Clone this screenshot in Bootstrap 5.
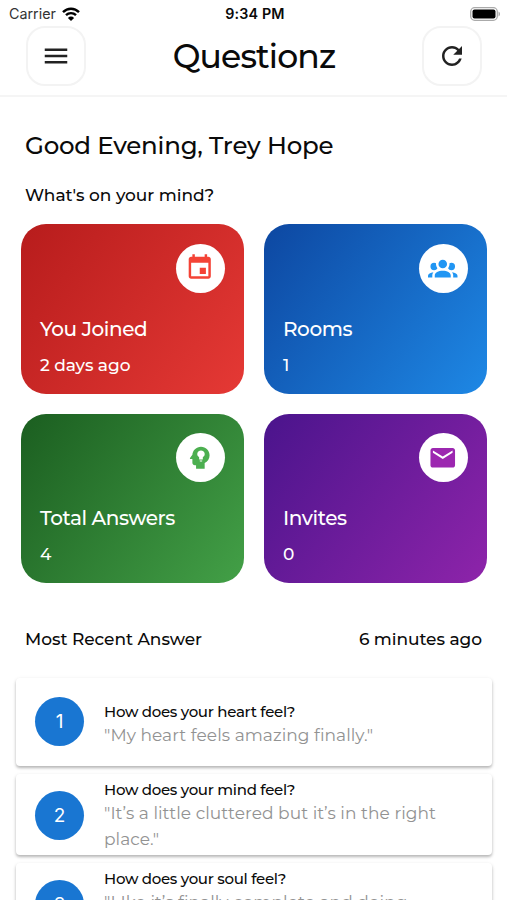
<!DOCTYPE html>
<html lang="en">
<head>
<meta charset="utf-8">
<meta name="viewport" content="width=device-width, initial-scale=1">
<title>Questionz</title>
<link href="https://cdn.jsdelivr.net/npm/bootstrap@5.3.0/dist/css/bootstrap.min.css" rel="stylesheet">
<style>
  body { font-family: Montserrat, Inter, sans-serif; color: #0a0a0a; background: #fff; }
  .screen { height: 900px; }
  .status-bar { height: 26px; font: 400 14.3px/26px Inter, sans-serif; padding: 1px 6px 0 9px; }
  .status-bar > * { flex: 1 1 0; }
  .carrier-group { gap: 6px; color: #333; }
  .clock { font-weight: 600; letter-spacing: .15px; }
  .app-header { height: 71px; padding: 0 25px 11px 26px; border-bottom: 2px solid #f5f5f5; }
  .tool-btn { width: 60px; height: 60px; border: 2px solid #f3f3f3; border-radius: 19px; color: #222; background: #fff; }
  .app-title { font-size: 33px; font-weight: 500; line-height: 60px; letter-spacing: -.85px; }
  .greeting { font-size: 24.5px; font-weight: 500; line-height: 32px; margin-top: 32px; padding-left: 25px; letter-spacing: -.22px; }
  .prompt { font-size: 17px; font-weight: 500; line-height: 24px; margin-top: 22px; padding-left: 25px; letter-spacing: -.04px; }
  .tiles { display: grid; grid-template-columns: 1fr 1fr; gap: 20px; padding: 0 20px 0 21px; margin-top: 17px; }
  .tile { height: 169.5px; border-radius: 25px; padding: 19.5px 19.5px 19.5px 19px; color: #fff; }
  .tile-red { background: linear-gradient(127.3deg, #b71c1c, #e53935); }
  .tile-blue { background: linear-gradient(127.3deg, #0d47a1, #1e88e5); }
  .tile-green { background: linear-gradient(127.3deg, #1b5e20, #43a047); }
  .tile-purple { background: linear-gradient(127.3deg, #4a148c, #8e24aa); }
  .tile-icon { width: 49px; height: 49px; }
  .tile-name { font-size: 20px; font-weight: 500; line-height: 28px; margin-top: 22px; letter-spacing: -.42px; }
  .tile-value { font-size: 17px; font-weight: 500; line-height: 24px; margin-top: 10px; letter-spacing: -.06px; }
  .recent { font-size: 17px; font-weight: 500; line-height: 24px; margin-top: 44px; padding: 0 25px; letter-spacing: -.05px; }
  .answers { margin-top: 27px; padding: 0 15px 0 16px; gap: 8px; }
  .answer { height: 81px; flex: none; border-radius: 4px; background: #fff; box-shadow: 0 2px 3px rgba(0,0,0,.26), 0 1px 5px rgba(0,0,0,.06); padding: 5px 30px 0 19px; gap: 20px; }
  .answer-single { height: 88px; padding-top: 23px; }
  .num { width: 49px; height: 49px; margin-top: 12px; background: #1976d2; color: #fff; font: 400 19px Inter, sans-serif; }
  .answer-single .num { margin-top: -4px; }
  .question { font-size: 15px; font-weight: 500; line-height: 22px; letter-spacing: -.3px; }
  .reply { font-size: 17px; font-weight: 400; line-height: 25.5px; color: #929292; letter-spacing: .06px; }
</style>
<script src="https://cdn.jsdelivr.net/npm/bootstrap@5.3.0/dist/js/bootstrap.bundle.min.js"></script>
</head>
<body>
<main class="screen d-flex flex-column overflow-hidden">
  <div class="status-bar d-flex align-items-center">
    <div class="carrier-group d-flex align-items-center"><span>Carrier</span>
      <svg width="18" height="14" viewBox="0 0 18 14"><g fill="none" stroke="#000" stroke-width="2.4"><path d="M1 5.2C5.5.6 12.500.6 17 5.200"/><path d="M4 8.200c2.800-2.800 7.200-2.800 10 0"/></g><path d="M9 14 5.900 10.900a4.400 4.400 0 0 1 6.200 0z"/></svg>
    </div>
    <div class="clock text-center">9:34 PM</div>
    <div class="d-flex justify-content-end">
      <svg width="31" height="14" viewBox="0 0 31 14"><rect x=".7" y=".7" width="26.600" height="12.600" rx="4" fill="#fff" stroke="#aaa" stroke-width="1.300"/><rect x="2.500" y="2.500" width="23" height="9" rx="2" fill="#000"/><path d="M28.500 4.500c2 .8 2 4.200 0 5z" fill="#aaa"/></svg>
    </div>
  </div>
  <header class="app-header d-flex justify-content-between align-items-start">
    <button class="tool-btn d-flex align-items-center justify-content-center p-0" aria-label="Menu"><svg width="30" height="30" viewBox="0 0 24 24" fill="currentColor"><path d="M3 18h18v-2H3v2zm0-5h18v-2H3v2zm0-7v2h18V6H3z"/></svg></button>
    <h1 class="app-title m-0">Questionz</h1>
    <button class="tool-btn d-flex align-items-center justify-content-center p-0" aria-label="Refresh"><svg width="30" height="30" viewBox="0 0 24 24" fill="currentColor"><path d="M17.650 6.350C16.200 4.900 14.210 4 12 4c-4.420 0-7.990 3.580-7.990 8s3.570 8 7.990 8c3.730 0 6.840-2.550 7.730-6h-2.080c-.82 2.330-3.040 4-5.650 4-3.310 0-6-2.690-6-6s2.690-6 6-6c1.660 0 3.140.69 4.220 1.780L13 11h7V4l-2.350 2.350z"/></svg></button>
  </header>
  <h2 class="greeting mb-0">Good Evening, Trey Hope</h2>
  <p class="prompt mb-0">What's on your mind?</p>
  <section class="tiles">
    <div class="tile tile-red">
      <div class="tile-icon bg-white rounded-circle ms-auto d-flex align-items-center justify-content-center"><svg width="29.500" height="29.500" viewBox="0 0 24 24" fill="#f44336"><path d="M17 12h-5v5h5v-5zM16 1v2H8V1H6v2H5c-1.110 0-1.990.9-1.990 2L3 19c0 1.100.89 2 2 2h14c1.100 0 2-.9 2-2V5c0-1.100-.9-2-2-2h-1V1h-2zm3 18H5V8h14v11z"/></svg></div>
      <div class="tile-name">You Joined</div><div class="tile-value">2 days ago</div>
    </div>
    <div class="tile tile-blue">
      <div class="tile-icon bg-white rounded-circle ms-auto d-flex align-items-center justify-content-center"><svg width="29.500" height="29.500" viewBox="0 0 24 24" fill="#2196f3"><path d="M12 5.500a3.500 3.500 0 1 1 0 7 3.500 3.500 0 0 1 0-7M5 8c.56 0 1.080.15 1.530.42-.15 1.430.27 2.850 1.130 3.960C7.160 13.340 6.160 14 5 14a3 3 0 0 1 0-6m14 0a3 3 0 0 1 0 6c-1.160 0-2.160-.66-2.660-1.620.86-1.110 1.280-2.530 1.130-3.960C17.920 8.150 18.440 8 19 8M5.500 18.250c0-2.070 2.910-3.750 6.500-3.750s6.500 1.680 6.500 3.750V20h-13zM0 20v-1.500c0-1.390 1.890-2.560 4.450-2.900-.59.68-.95 1.620-.95 2.650V20zm24 0h-3.500v-1.750c0-1.030-.36-1.970-.95-2.650 2.560.34 4.450 1.510 4.450 2.900z"/></svg></div>
      <div class="tile-name">Rooms</div><div class="tile-value">1</div>
    </div>
    <div class="tile tile-green">
      <div class="tile-icon bg-white rounded-circle ms-auto d-flex align-items-center justify-content-center"><svg width="29.500" height="29.500" viewBox="0 0 24 24"><path fill="#4caf50" d="M13 3C9.230 3 6.190 5.950 6 9.660l-1.920 2.530c-.24.31 0 .81.420.81H6v3c0 1.110.89 2 2 2h1v3h7v-4.690c2.370-1.120 4-3.510 4-6.310 0-3.860-3.120-7-7-7"/><path fill="#fff" d="M13 6a3 3 0 0 0-1.500 5.600V13c0 .3.200.5.500.5h2c.3 0 .5-.2.500-.5v-1.400A3 3 0 0 0 13 6M12 14.200h2v.4c0 .3-.2.500-.5.500h-1c-.3 0-.5-.2-.5-.5z"/></svg></div>
      <div class="tile-name">Total Answers</div><div class="tile-value">4</div>
    </div>
    <div class="tile tile-purple">
      <div class="tile-icon bg-white rounded-circle ms-auto d-flex align-items-center justify-content-center"><svg width="29.500" height="29.500" viewBox="0 0 24 24" fill="#9c27b0"><path d="M20 4H4c-1.100 0-1.990.9-1.990 2L2 18c0 1.100.9 2 2 2h16c1.100 0 2-.9 2-2V6c0-1.100-.9-2-2-2zm0 4-8 5-8-5V6l8 5 8-5v2z"/></svg></div>
      <div class="tile-name">Invites</div><div class="tile-value">0</div>
    </div>
  </section>
  <div class="recent d-flex justify-content-between"><span>Most Recent Answer</span><span>6 minutes ago</span></div>
  <section class="answers d-flex flex-column">
    <article class="answer answer-single d-flex align-items-start">
      <div class="num rounded-circle flex-shrink-0 d-flex align-items-center justify-content-center">1</div>
      <div><div class="question">How does your heart feel?</div><div class="reply">"My heart feels amazing finally."</div></div>
    </article>
    <article class="answer d-flex align-items-start">
      <div class="num rounded-circle flex-shrink-0 d-flex align-items-center justify-content-center">2</div>
      <div><div class="question">How does your mind feel?</div><div class="reply">"It’s a little cluttered but it’s in the right place."</div></div>
    </article>
    <article class="answer d-flex align-items-start">
      <div class="num rounded-circle flex-shrink-0 d-flex align-items-center justify-content-center">3</div>
      <div><div class="question">How does your soul feel?</div><div class="reply">"LIke it’s finally complete and doing</div></div>
    </article>
  </section>
</main>
</body>
</html>
